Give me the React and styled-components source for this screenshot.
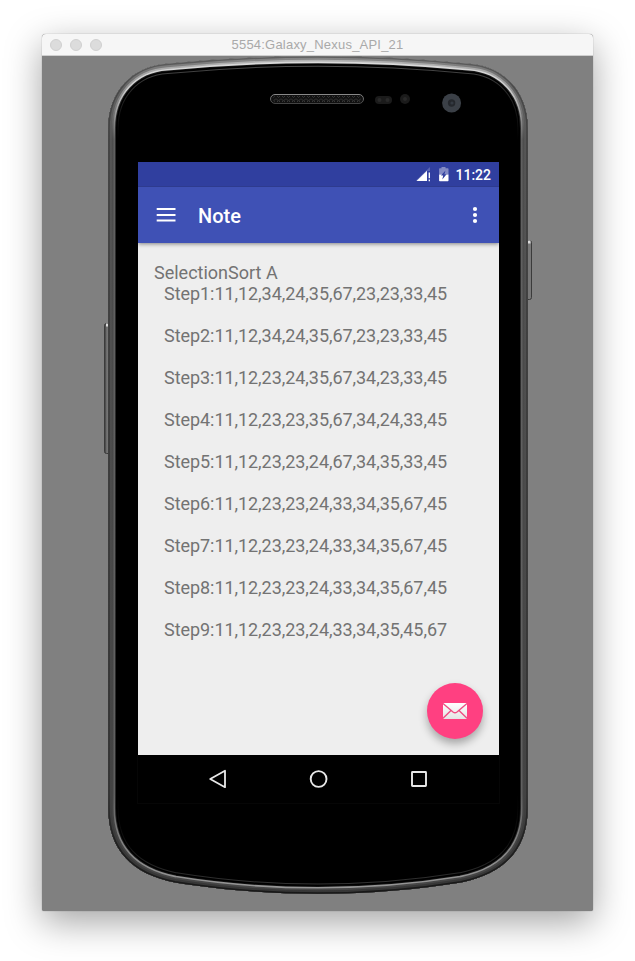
import React from "react";
import styled, { createGlobalStyle } from "styled-components";

const GlobalStyle = createGlobalStyle`
  * { box-sizing: border-box; }
  body { margin: 0; background: #fff; overflow: hidden; }
`;

const Desktop = styled.main`
  width: 635px;
  height: 961px;
  padding: 34px 42px 50px;
  background: #fff;
  overflow: hidden;
`;

const EmulatorWindow = styled.section`
  display: flex;
  flex-direction: column;
  width: 551px;
  height: 877px;
  border-radius: 4px 4px 2px 2px;
  background: #808080;
  box-shadow: 0 0 1px rgba(0, 0, 0, 0.5), 0 11px 36px rgba(0, 0, 0, 0.36);
`;

const TitleBar = styled.header`
  display: grid;
  grid-template-columns: 100px 1fr 100px;
  align-items: center;
  flex: none;
  height: 22px;
  border-bottom: 1px solid #cfcfcf;
  border-radius: 4px 4px 0 0;
  background: #f6f6f6;
`;

const WindowButtons = styled.div`
  display: flex;
  gap: 8px;
  padding-left: 8px;
`;

const WindowButton = styled.span`
  width: 12px;
  height: 12px;
  border: 1px solid #d0d0d0;
  border-radius: 50%;
  background: #dcdcdc;
`;

const WindowTitle = styled.h1`
  margin: 0;
  padding-top: 1px;
  color: #a9a9a9;
  font: 400 13px/20px "Liberation Sans", Arial, sans-serif;
  letter-spacing: 0.21px;
  text-align: center;
  white-space: nowrap;
`;

const Stage = styled.div`
  position: relative;
  flex: 1;
  padding: 106px 94px 0 96px;
`;

const ShellDrawing = styled.svg`
  position: absolute;
  top: 0;
  left: 0;
`;

const Screen = styled.div`
  position: relative;
  display: flex;
  flex-direction: column;
  width: 361px;
  height: 641px;
  background: #eee;
  font-family: Roboto, sans-serif;
`;

const StatusBar = styled.div`
  display: flex;
  align-items: center;
  justify-content: flex-end;
  flex: none;
  height: 25px;
  padding-right: 8px;
  border-bottom: 1px solid #2e3b8f;
  background: #303f9f;
`;

const StatusIcons = styled.svg`
  width: 34px;
  height: 16px;
  margin: 2px 5px 0 0;
`;

const Clock = styled.time`
  color: #fff;
  font-size: 14px;
  font-weight: 500;
  line-height: 24px;
  padding-top: 2px;
`;

const AppBar = styled.div`
  display: flex;
  align-items: center;
  flex: none;
  height: 56px;
  padding: 0 17px 0 16px;
  background: #3f51b5;
  box-shadow: 0 1px 4px rgba(0, 0, 0, 0.45);
  clip-path: inset(0 0 -8px 0);
  z-index: 1;
`;

const IconButton = styled.button`
  display: flex;
  padding: 0;
  border: 0;
  background: none;
`;

const AppTitle = styled.h2`
  flex: 1;
  margin: 2px 0 0 20px;
  color: #fff;
  font-size: 20px;
  font-weight: 500;
  line-height: 24px;
`;

const Note = styled.article`
  flex: 1;
  padding: 19px 16px 0;
  color: #737373;
  font-size: 18px;
  line-height: 21px;
  white-space: nowrap;
`;

const NoteHeading = styled.p`
  margin: 0;
`;

const StepList = styled.div`
  display: flex;
  flex-direction: column;
  gap: 21px;
  padding-left: 10px;
  letter-spacing: -0.055px;
`;

const Step = styled.p`
  margin: 0;
`;

const ComposeButton = styled.button`
  position: absolute;
  right: 16px;
  bottom: 64px;
  display: grid;
  place-items: center;
  width: 56px;
  height: 56px;
  padding: 0;
  border: 0;
  border-radius: 50%;
  background: #ff4081;
  box-shadow: 0 5px 9px rgba(0, 0, 0, 0.3);
`;

const NavigationBar = styled.nav`
  display: flex;
  justify-content: center;
  align-items: center;
  gap: 76px;
  flex: none;
  height: 48px;
  background: #000;
  box-shadow: 0 0 0 1px #060606;
  clip-path: inset(0 -1px -1px -1px);
`;

const outline =
  "M108.3 128C108.3 92 132 66 167 63.7Q318 49 469 63.7C504 66 527.7 92 527.7 128V808C527.7 850 504 874 461 882.5C421 889 371 893.8 318 893.8C265 893.8 215 889 175 882.5C132 874 108.3 850 108.3 808Z";

// Rim bands, deepest first; each covers the outline to half its stroke width.
const rimBands = [
  ["url(#innerLine)", 20.6],
  ["#000", 18.6],
  ["url(#darkRim)", 15.4],
  ["url(#highlight)", 13.6],
  ["url(#midRim)", 10.4],
  ["url(#outerRim)", 7],
  ["url(#edge)", 3],
];

const rimStops = {
  innerLine: ["#555", "#292929", "#000", "#000", "#111", "#3a3a3a"],
  darkRim: ["#111", "#222", "#282828", "#242424", "#181818", "#101010"],
  highlight: ["#ddd", "#ccc", "#606060", "#606060", "#808080", "#999"],
  midRim: ["#b8b8b8", "#909090", "#4d4d4d", "#444", "#444", "#484848"],
  outerRim: ["#888", "#626262", "#565656", "#434343", "#383838", "#363636"],
  edge: ["#606060", "#484848", "#404040", "#303030", "#202020", "#181818"],
};
const offsets = [0, 0.04, 0.1, 0.88, 0.94, 1];

function PhoneShell() {
  return (
    <ShellDrawing width="551" height="855" viewBox="42 56 551 855" aria-hidden="true">
      <defs>
        <clipPath id="phoneClip"><path d={outline} /></clipPath>
        {Object.entries(rimStops).map(([id, colors]) => (
          <linearGradient key={id} id={id} gradientUnits="userSpaceOnUse" x1="0" y1="56" x2="0" y2="894">
            {colors.map((c, i) => <stop key={i} offset={offsets[i]} stopColor={c} />)}
          </linearGradient>
        ))}
        <pattern id="mesh" width="5" height="5" x="271" y="96" patternUnits="userSpaceOnUse">
          <path d="M0 2.5L2.5 5L5 2.5M1 0L2.5 1.5L4 0" fill="none" stroke="#383838" />
        </pattern>
        <linearGradient id="grille" x2="0" y2="1">
          <stop stopColor="#888" /><stop offset="1" stopColor="#444" />
        </linearGradient>
        <linearGradient id="sideKey" x2="1" y2="0">
          <stop stopColor="#333" /><stop offset=".4" stopColor="#777" /><stop offset="1" stopColor="#686868" />
        </linearGradient>
      </defs>
      <rect x="104.5" y="323.5" width="6" height="130" rx="2" fill="url(#sideKey)" stroke="#3b3b3b" />
      <path d="M106 325h3" stroke="#ddd" strokeWidth="3" />
      <rect x="525.5" y="240.5" width="6" height="59" rx="2" fill="#777" stroke="#3b3b3b" />
      <path d="M528 242h2.5" stroke="#ddd" strokeWidth="3" />
      <path d={outline} fill="#000" />
      <g clipPath="url(#phoneClip)" fill="none">
        {rimBands.map(([stroke, width]) => (
          <path key={width} d={outline} stroke={stroke} strokeWidth={width} />
        ))}
      </g>
      <rect x="270.5" y="94.5" width="93" height="9" rx="4.5" fill="#111" stroke="url(#grille)" />
      <rect x="273" y="96" width="88" height="6" rx="3" fill="url(#mesh)" />
      <rect x="375" y="96" width="17" height="8" rx="4" fill="#1b1b1b" />
      <circle cx="379.5" cy="100" r="2" fill="#292929" />
      <circle cx="387.5" cy="100" r="2" fill="#292929" />
      <circle cx="405" cy="99" r="5" fill="#1b1b1b" />
      <circle cx="405" cy="99" r="2" fill="#292929" />
      <circle cx="451.6" cy="103" r="9.5" fill="#3b4047" />
      <circle cx="451.6" cy="103" r="3.7" fill="#25282d" />
      <circle cx="452" cy="103" r="1.6" fill="#343a42" />
    </ShellDrawing>
  );
}

const steps = [
  "11,12,34,24,35,67,23,23,33,45",
  "11,12,34,24,35,67,23,23,33,45",
  "11,12,23,24,35,67,34,23,33,45",
  "11,12,23,23,35,67,34,24,33,45",
  "11,12,23,23,24,67,34,35,33,45",
  "11,12,23,23,24,33,34,35,67,45",
  "11,12,23,23,24,33,34,35,67,45",
  "11,12,23,23,24,33,34,35,67,45",
  "11,12,23,23,24,33,34,35,45,67",
];

export default function App() {
  return (
    <Desktop>
      <GlobalStyle />
      <EmulatorWindow>
        <TitleBar>
          <WindowButtons><WindowButton /><WindowButton /><WindowButton /></WindowButtons>
          <WindowTitle>5554:Galaxy_Nexus_API_21</WindowTitle>
        </TitleBar>
        <Stage>
          <PhoneShell />
          <Screen>
            <StatusBar>
              <StatusIcons viewBox="0 0 34 16" aria-hidden="true">
                <path d="M14 0V4H11V13.5H0Z" fill="#7b85c4" opacity=".55" />
                <path d="M0.5 14L11 3.7V14Z" fill="#fff" />
                <path d="M13.3 5.5v5.8M13.3 12.4v1.8" stroke="#fff" strokeWidth="1.3" />
                <path d="M25.5 0h4v1.3h2.3q.7 0 .7.7v5.5h-9.4V2q0-.7.7-.7h1.7Z" fill="#838bc5" />
                <path d="M23.1 7.5h9.4v6q0 .7-.7.7h-8q-.7 0-.7-.7Z" fill="#fff" />
                <path d="M29.5 3.4l-4.5 5h2.2l-.9 4 4.3-5.2h-2.2Z" fill="#303f9f" />
              </StatusIcons>
              <Clock>11:22</Clock>
            </StatusBar>
            <AppBar>
              <IconButton aria-label="Open menu">
                <svg width="24" height="24" viewBox="0 0 24 24">
                  <path d="M2.7 6h18.8M2.7 12h18.8M2.7 17.5h18.8" stroke="#fff" strokeWidth="2" />
                </svg>
              </IconButton>
              <AppTitle>Note</AppTitle>
              <IconButton aria-label="More options">
                <svg width="14" height="24" viewBox="0 0 14 24" fill="#fff">
                  <circle cx="7" cy="6" r="2.1" /><circle cx="7" cy="12" r="2.1" /><circle cx="7" cy="18" r="2.1" />
                </svg>
              </IconButton>
            </AppBar>
            <Note>
              <NoteHeading>SelectionSort A</NoteHeading>
              <StepList>
                {steps.map((values, i) => <Step key={i}>Step{i + 1}:{values}</Step>)}
              </StepList>
            </Note>
            <ComposeButton aria-label="Send note">
              <svg width="26" height="18" viewBox="0 0 26 18">
                <defs><linearGradient id="paper" x2="0" y2="1"><stop stopColor="#fff" /><stop offset="1" stopColor="#e4e4e4" /></linearGradient></defs>
                <rect x="1" y="1" width="24" height="16" rx="1" fill="url(#paper)" />
                <path d="M1 1.5L11 10q2 1.5 4 0L25 1.5M1 16.2L9 8.5M25 16.2L17 8.5" fill="none" stroke="#ef4d83" strokeWidth="1.4" />
              </svg>
            </ComposeButton>
            <NavigationBar>
              <IconButton aria-label="Back">
                <svg width="24" height="24" viewBox="0 0 24 24"><path d="M3.2 12L18 3.8V20.2Z" fill="none" stroke="#e8e8e8" strokeWidth="1.8" strokeLinejoin="round" /></svg>
              </IconButton>
              <IconButton aria-label="Home">
                <svg width="24" height="24" viewBox="0 0 24 24"><circle cx="11.6" cy="12" r="7.9" fill="none" stroke="#e8e8e8" strokeWidth="1.9" /></svg>
              </IconButton>
              <IconButton aria-label="Recent apps">
                <svg width="24" height="24" viewBox="0 0 24 24"><rect x="5" y="5" width="14" height="14" rx=".5" fill="none" stroke="#e8e8e8" strokeWidth="1.9" /></svg>
              </IconButton>
            </NavigationBar>
          </Screen>
        </Stage>
      </EmulatorWindow>
    </Desktop>
  );
}
